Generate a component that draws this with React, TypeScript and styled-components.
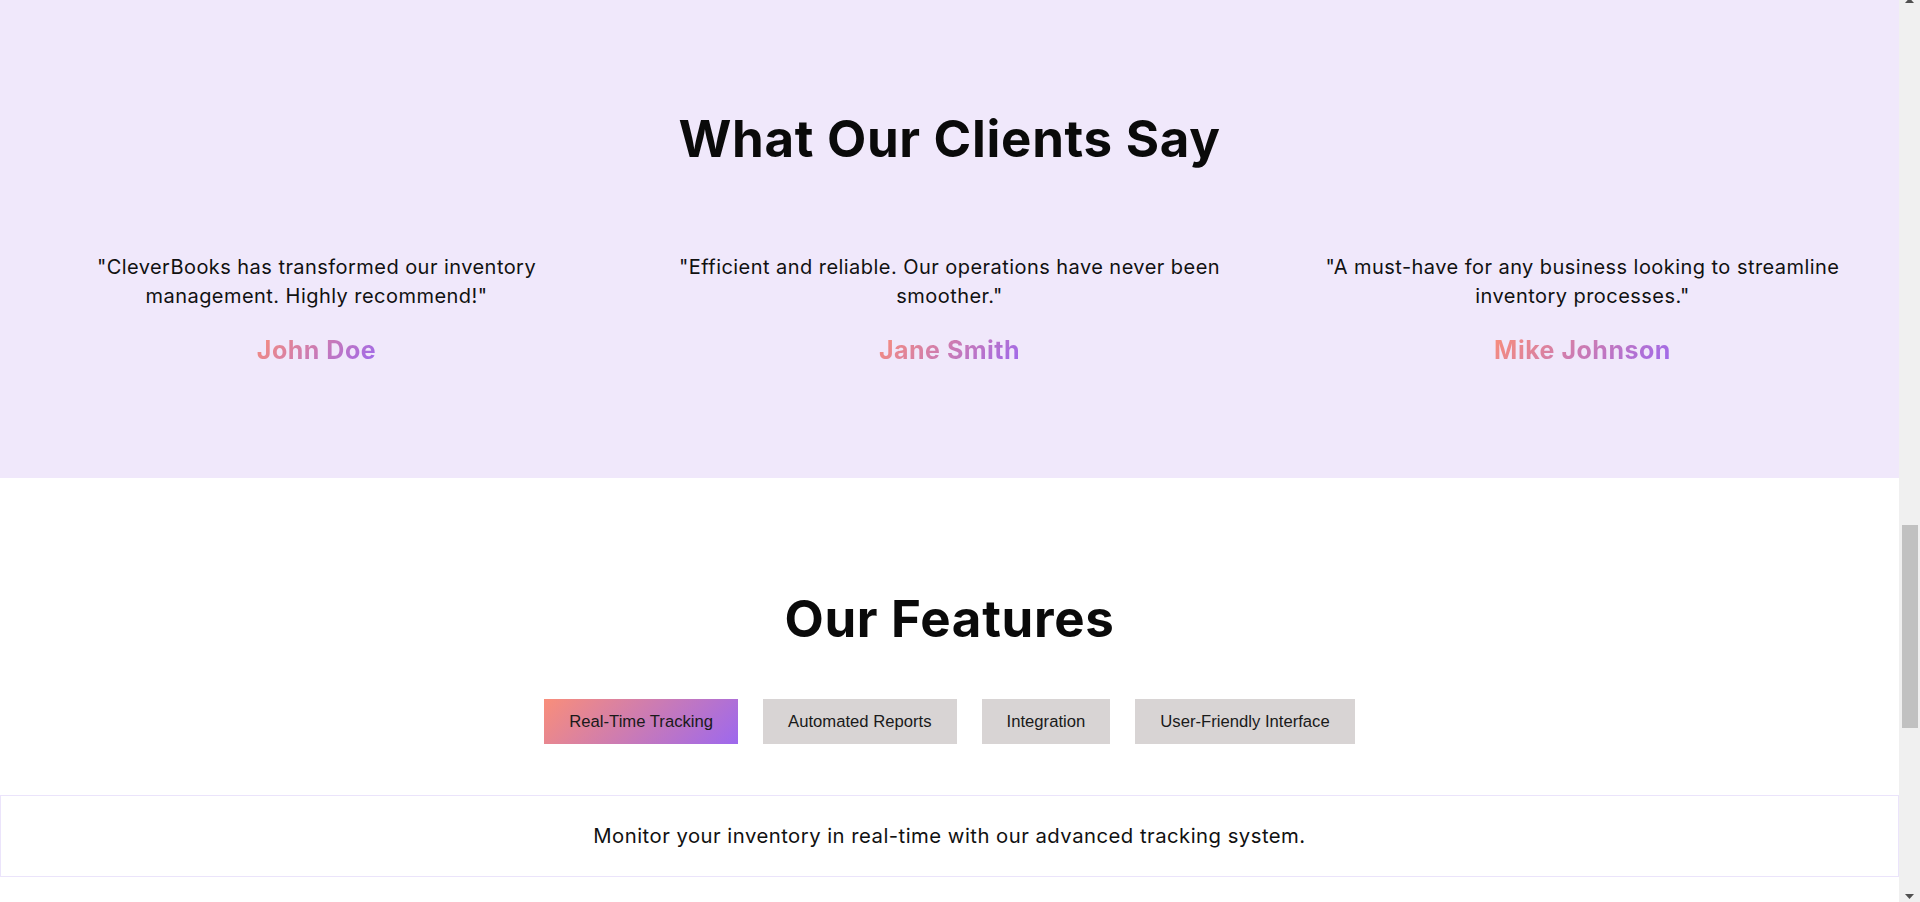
import React, { useState } from 'react';
import styled, { createGlobalStyle } from 'styled-components';

const GlobalStyle = createGlobalStyle`
    * {
        box-sizing: border-box;
    }

    html,
    body {
        margin: 0;
        padding: 0;
        background: #ffffff;
        font-family: 'Inter', 'Open Sans', sans-serif;
        color: #111111;
    }
`;

const BRAND_GRADIENT = 'linear-gradient(135deg, #f98e7a 0%, #9d68ee 100%)';

const Viewport = styled.div`
    display: flex;
    height: 100vh;
    overflow: hidden;
`;

const Page = styled.main`
    flex: 1;
    min-width: 0;
    overflow: hidden;
`;

const TestimonialsSection = styled.section`
    background: #f0e8fb;
    padding: 108px 0 113.5px;
    text-align: center;
`;

const SectionTitle = styled.h2`
    margin: 0;
    font-size: 51px;
    line-height: 1.2;
    font-weight: 700;
    letter-spacing: 0.7px;
    color: #0a0a0a;
`;

const TestimonialGrid = styled.div`
    display: grid;
    grid-template-columns: repeat(3, 1fr);
    margin-top: 84px;
`;

const TestimonialCard = styled.figure`
    margin: 0;
    padding: 0 40px;
`;

const Quote = styled.blockquote`
    margin: 0;
    font-size: 20px;
    line-height: 28.8px;
    letter-spacing: 0.45px;
    color: #111111;
`;

const ClientName = styled.figcaption`
    display: inline-block;
    margin-top: 24px;
    font-size: 25px;
    line-height: 30px;
    font-weight: 700;
    letter-spacing: 0.5px;
    background: ${BRAND_GRADIENT};
    -webkit-background-clip: text;
    background-clip: text;
    color: transparent;
`;

const FeaturesSection = styled.section`
    padding-top: 110px;
    padding-bottom: 120px;
    text-align: center;
`;

const TabRow = styled.div`
    display: flex;
    justify-content: center;
    gap: 25px;
    margin-top: 50px;
`;

const TabButton = styled.button<{ $active: boolean }>`
    border: none;
    border-radius: 0;
    padding: 12.5px 25px 12px;
    font-family: 'Liberation Sans', Arial, sans-serif;
    font-size: 16.67px;
    color: #1a1a1a;
    background: ${({ $active }) => ($active ? BRAND_GRADIENT : '#d8d4d4')};
    cursor: pointer;
`;

const FeatureBox = styled.div`
    margin-top: 51px;
    padding: 25px 0 26px;
    border: 1px solid #ebe4fb;
`;

const FeatureText = styled.p`
    margin: 0;
    font-size: 20.3px;
    line-height: 29px;
    letter-spacing: 0.48px;
    color: #111111;
`;

const ScrollTrack = styled.div`
    flex: 0 0 21px;
    display: flex;
    flex-direction: column;
    align-items: center;
    background: #f0f0f0;
`;

const ArrowUp = styled.svg`
    flex: none;
    margin-top: -2px;
`;

const Thumb = styled.div`
    flex: none;
    width: 16px;
    height: 203px;
    margin-top: 522px;
    background: #c1c1c1;
`;

const TrackSpacer = styled.div`
    flex: 1;
`;

const ArrowDown = styled.svg`
    flex: none;
    margin-bottom: 3px;
`;

const testimonials = [
    {
        quote: '"CleverBooks has transformed our inventory management. Highly recommend!"',
        name: 'John Doe',
    },
    {
        quote: '"Efficient and reliable. Our operations have never been smoother."',
        name: 'Jane Smith',
    },
    {
        quote: '"A must-have for any business looking to streamline inventory processes."',
        name: 'Mike Johnson',
    },
];

const features = [
    {
        label: 'Real-Time Tracking',
        text: 'Monitor your inventory in real-time with our advanced tracking system.',
    },
    {
        label: 'Automated Reports',
        text: 'Generate detailed inventory reports automatically, whenever you need them.',
    },
    {
        label: 'Integration',
        text: 'Connect seamlessly with the accounting and e-commerce tools you already use.',
    },
    {
        label: 'User-Friendly Interface',
        text: 'Get started quickly with a clean interface designed for everyday use.',
    },
];

const App = () => {
    const [activeFeature, setActiveFeature] = useState(0);

    return (
        <>
            <GlobalStyle />
            <Viewport>
                <Page>
                    <TestimonialsSection>
                        <SectionTitle>What Our Clients Say</SectionTitle>
                        <TestimonialGrid>
                            {testimonials.map(({ quote, name }) => (
                                <TestimonialCard key={name}>
                                    <Quote>{quote}</Quote>
                                    <ClientName>{name}</ClientName>
                                </TestimonialCard>
                            ))}
                        </TestimonialGrid>
                    </TestimonialsSection>

                    <FeaturesSection>
                        <SectionTitle>Our Features</SectionTitle>
                        <TabRow>
                            {features.map(({ label }, index) => (
                                <TabButton
                                    key={label}
                                    $active={index === activeFeature}
                                    onClick={() => setActiveFeature(index)}
                                >
                                    {label}
                                </TabButton>
                            ))}
                        </TabRow>
                        <FeatureBox>
                            <FeatureText>{features[activeFeature].text}</FeatureText>
                        </FeatureBox>
                    </FeaturesSection>
                </Page>

                <ScrollTrack>
                    <ArrowUp width="9" height="5" viewBox="0 0 9 5">
                        <path d="M4.5 0 L9 5 L0 5 Z" fill="#505050" />
                    </ArrowUp>
                    <Thumb />
                    <TrackSpacer />
                    <ArrowDown width="9" height="5" viewBox="0 0 9 5">
                        <path d="M0 0 L9 0 L4.5 5 Z" fill="#505050" />
                    </ArrowDown>
                </ScrollTrack>
            </Viewport>
        </>
    );
};

export default App;
